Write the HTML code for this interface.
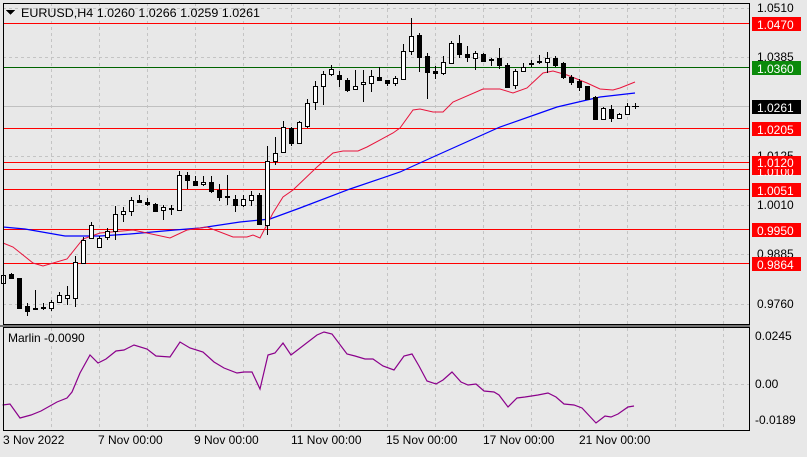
<!DOCTYPE html><html><head><meta charset="utf-8"><style>
body{margin:0;background:#e8e8e8;width:807px;height:452px;overflow:hidden;font-family:"Liberation Sans",sans-serif}
svg text{font-family:"Liberation Sans",sans-serif;font-size:12px}
</style></head><body>
<svg width="807" height="452" viewBox="0 0 807 452" xmlns="http://www.w3.org/2000/svg" shape-rendering="crispEdges">
<rect width="807" height="452" fill="#e8e8e8"/>
<g stroke="#c4c4c4" stroke-dasharray="3,3">
<line x1="3" y1="57.5" x2="750" y2="57.5"/><line x1="3" y1="156.5" x2="750" y2="156.5"/><line x1="3" y1="205.5" x2="750" y2="205.5"/><line x1="3" y1="254.5" x2="750" y2="254.5"/><line x1="3" y1="304.5" x2="750" y2="304.5"/><line x1="3" y1="8.5" x2="750" y2="8.5"/>
<line x1="3" y1="384.5" x2="750" y2="384.5"/>
<path d="M51.5 3V325M99.5 3V325M147.5 3V325M195.5 3V325M243.5 3V325M291.5 3V325M339.5 3V325M387.5 3V325M435.5 3V325M483.5 3V325M531.5 3V325M579.5 3V325M627.5 3V325M675.5 3V325M723.5 3V325"/>
<path d="M51.5 328V430M99.5 328V430M147.5 328V430M195.5 328V430M243.5 328V430M291.5 328V430M339.5 328V430M387.5 328V430M435.5 328V430M483.5 328V430M531.5 328V430M579.5 328V430M627.5 328V430M675.5 328V430M723.5 328V430"/>
</g>
<line x1="3" y1="106.5" x2="750" y2="106.5" stroke="#c0c0c0"/>
<g stroke="#ff0000">
<line x1="3" y1="23.5" x2="750" y2="23.5"/><line x1="3" y1="128.5" x2="750" y2="128.5"/><line x1="3" y1="162.5" x2="750" y2="162.5"/><line x1="3" y1="169.5" x2="750" y2="169.5"/><line x1="3" y1="189.5" x2="750" y2="189.5"/><line x1="3" y1="229.5" x2="750" y2="229.5"/><line x1="3" y1="263.5" x2="750" y2="263.5"/>
</g>
<line x1="3" y1="67.5" x2="750" y2="67.5" stroke="#006400"/>
<g shape-rendering="auto" fill="none">
<polyline stroke="#0000ff" stroke-width="1.2" points="3,227 25,229 65,236 100,236 130,234 175,230 200,228 240,222 270,219 300,208 350,189 400,172 433,157 500,127 540,113 557,107 587,100 600,97 635,93"/>
<polyline stroke="#e8143c" stroke-width="1" points="3,243 13,247 33,263 43,266 67,259 83,239 100,233 133,230 170,238 187,230 207,227 233,237 247,237 253,235 260,238 273,213 283,197 293,190 317,167 333,153 343,151 358,151 367,147 393,133 400,128 413,110 420,109 433,112 443,112 453,102 483,89 500,89 513,93 527,88 543,73 553,71 567,75 587,83 600,89 613,90 620,88 635,82"/>
</g>
<g stroke="#000" fill="#fff">
<path d="M3.5 272V286M11.5 273V279M19.5 278V309M27.5 303V316M35.5 290V310M43.5 303V310M51.5 300V311M59.5 292V303M67.5 286V305M75.5 256V307M83.5 237V264M91.5 222V239M99.5 236V247M107.5 228V240M115.5 206V240M123.5 207V222M131.5 197V216M139.5 195V202M147.5 198V206M155.5 203V212M163.5 205V220M171.5 205V215M179.5 171V211M187.5 172V189M195.5 176V186M203.5 176V186M211.5 176V193M219.5 184V201M227.5 175V205M235.5 195V212M243.5 195V207M251.5 191V206M259.5 193V225M267.5 146V235M275.5 137V165M283.5 121V152M291.5 127V146M299.5 121V143M307.5 99V128M315.5 81V110M323.5 71V105M331.5 65V76M339.5 71V87M347.5 78V92M355.5 70V90M363.5 70V102M371.5 70V92M379.5 67V81M387.5 80V86M395.5 76V86M403.5 44V79M411.5 18V55M419.5 33V72M427.5 53V99M435.5 66V79M443.5 56V75M451.5 41V64M459.5 35V58M467.5 46V62M475.5 51V70M483.5 53V62M491.5 58V66M499.5 48V69M507.5 63V87M515.5 69V89M523.5 63V72M531.5 60V67M539.5 55V64M547.5 52V73M555.5 56V67M563.5 62V79M571.5 75V85M579.5 79V91M587.5 86V100M595.5 96V120M603.5 107V120M611.5 105V122M619.5 113V118M627.5 103V115M635.5 103V109M632 106.5H639"/>
<rect x="1.5" y="275.5" width="4" height="8"/><rect x="57.5" y="295.5" width="4" height="7"/><rect x="49.5" y="302.5" width="4" height="6"/><rect x="65.5" y="295.5" width="4" height="3"/><rect x="73.5" y="262.5" width="4" height="36"/><rect x="81.5" y="240.5" width="4" height="23"/><rect x="89.5" y="225.5" width="4" height="13"/><rect x="97.5" y="238.5" width="4" height="9"/><rect x="105.5" y="231.5" width="4" height="6"/><rect x="113.5" y="214.5" width="4" height="17"/><rect x="121.5" y="211.5" width="4" height="3"/><rect x="129.5" y="200.5" width="4" height="11"/><rect x="161.5" y="207.5" width="4" height="3"/><rect x="177.5" y="175.5" width="4" height="35"/><rect x="201.5" y="182.5" width="4" height="2"/><rect x="241.5" y="199.5" width="4" height="6"/><rect x="249.5" y="195.5" width="4" height="5"/><rect x="265.5" y="161.5" width="4" height="64"/><rect x="273.5" y="153.5" width="4" height="8"/><rect x="281.5" y="127.5" width="4" height="25"/><rect x="297.5" y="122.5" width="4" height="21"/><rect x="305.5" y="103.5" width="4" height="23"/><rect x="313.5" y="86.5" width="4" height="16"/><rect x="321.5" y="74.5" width="4" height="12"/><rect x="329.5" y="69.5" width="4" height="5"/><rect x="353.5" y="86.5" width="4" height="3"/><rect x="361.5" y="82.5" width="4" height="2"/><rect x="369.5" y="76.5" width="4" height="7"/><rect x="393.5" y="78.5" width="4" height="5"/><rect x="401.5" y="51.5" width="4" height="28"/><rect x="409.5" y="36.5" width="4" height="15"/><rect x="441.5" y="62.5" width="4" height="11"/><rect x="449.5" y="43.5" width="4" height="20"/><rect x="473.5" y="53.5" width="4" height="5"/><rect x="513.5" y="71.5" width="4" height="14"/><rect x="521.5" y="67.5" width="4" height="4"/><rect x="545.5" y="58.5" width="4" height="4"/><rect x="601.5" y="108.5" width="4" height="11"/><rect x="617.5" y="114.5" width="4" height="4"/><rect x="625.5" y="106.5" width="4" height="8"/>
</g>
<g fill="#000">
<rect x="9" y="274" width="5" height="5"/><rect x="17" y="278" width="5" height="31"/><rect x="25" y="306" width="5" height="6"/><rect x="33" y="308" width="5" height="2"/><rect x="41" y="307" width="5" height="2"/><rect x="137" y="200" width="5" height="3"/><rect x="145" y="202" width="5" height="3"/><rect x="153" y="204" width="5" height="8"/><rect x="169" y="208" width="5" height="2"/><rect x="185" y="175" width="5" height="6"/><rect x="193" y="181" width="5" height="5"/><rect x="209" y="182" width="5" height="10"/><rect x="217" y="190" width="5" height="8"/><rect x="225" y="196" width="5" height="2"/><rect x="233" y="199" width="5" height="7"/><rect x="257" y="195" width="5" height="30"/><rect x="289" y="128" width="5" height="16"/><rect x="337" y="75" width="5" height="5"/><rect x="345" y="80" width="5" height="11"/><rect x="377" y="77" width="5" height="4"/><rect x="385" y="80" width="5" height="4"/><rect x="417" y="35" width="5" height="23"/><rect x="425" y="56" width="5" height="17"/><rect x="433" y="71" width="5" height="3"/><rect x="457" y="43" width="5" height="12"/><rect x="465" y="54" width="5" height="4"/><rect x="481" y="54" width="5" height="8"/><rect x="489" y="59" width="5" height="2"/><rect x="497" y="58" width="5" height="8"/><rect x="505" y="65" width="5" height="23"/><rect x="529" y="63" width="5" height="2"/><rect x="537" y="61" width="5" height="2"/><rect x="553" y="58" width="5" height="8"/><rect x="561" y="63" width="5" height="15"/><rect x="569" y="77" width="5" height="6"/><rect x="577" y="81" width="5" height="7"/><rect x="585" y="86" width="5" height="14"/><rect x="593" y="97" width="5" height="23"/><rect x="609" y="109" width="5" height="10"/>
</g>
<polyline shape-rendering="auto" fill="none" stroke="#8b008b" stroke-width="1.2" points="2.6,405 10,404 20,418 31,415 41,411 57,402 67,398 72,392 80,373 90,355 98,363 106,359 116,351 124,350 134,345 147,349 156,356 170,357 180,342 190,348 203,352 214,362 224,368 237,373 244,372 252,372 260,389 268,355 275,353 283,343 291,355 317,335 324,332 332,334 347,354 355,356 365,359 373,359 383,366 394,370 404,356 412,354 419,366 427,381 436,384 443,380 452,372 461,382 468,385 476,384 484,391 494,392 499,395 508,407 517,398 525,397 538,395 548,393 556,397 564,404 574,405 582,408 596,423 605,416 611,417 618,414 628,407 634,406"/>
<rect x="3.5" y="3.5" width="746" height="321" fill="none" stroke="#000"/>
<rect x="3.5" y="327.5" width="746" height="103" fill="none" stroke="#000"/>
<line x1="0" y1="326" x2="750" y2="326" stroke="#000"/>
<path d="M6 10H15L10.5 15Z" fill="#000"/>
<text x="21" y="17" fill="#000" font-size="12.5" textLength="239" lengthAdjust="spacingAndGlyphs">EURUSD,H4  1.0260 1.0266 1.0259 1.0261</text>
<text x="8" y="342" fill="#000">Marlin -0.0090</text>
<g fill="#000">
<text x="757" y="12">1.0510</text><text x="757" y="61">1.0385</text><text x="757" y="160">1.0125</text><text x="757" y="209">1.0010</text><text x="757" y="258">0.9885</text><text x="757" y="308">0.9760</text>
<text x="755" y="340">0.0245</text><text x="755" y="388">0.00</text><text x="755" y="424">-0.0189</text>
<text x="3" y="444">3 Nov 2022</text><text x="98" y="444">7 Nov 00:00</text><text x="194" y="444">9 Nov 00:00</text><text x="291" y="444">11 Nov 00:00</text><text x="386" y="444">15 Nov 00:00</text><text x="483" y="444">17 Nov 00:00</text><text x="579" y="444">21 Nov 00:00</text>
</g>
<g fill="#ff0000"><rect x="752" y="17" width="49" height="14"/><rect x="752" y="122" width="49" height="14"/><rect x="752" y="156" width="49" height="14"/><rect x="752" y="165" width="49" height="10"/><rect x="752" y="183" width="49" height="14"/><rect x="752" y="223" width="49" height="14"/><rect x="752" y="257" width="49" height="14"/></g>
<rect x="752" y="61" width="49" height="14" fill="#0b8a0b"/><rect x="752" y="100" width="49" height="14" fill="#000"/>
<g fill="#fff"><text x="757" y="176">1.0100</text><text x="757" y="29">1.0470</text><text x="757" y="73">1.0360</text><text x="757" y="112">1.0261</text><text x="757" y="134">1.0205</text><text x="757" y="195">1.0051</text><text x="757" y="235">0.9950</text><text x="757" y="269">0.9864</text></g>
<rect x="752" y="156" width="49" height="13" fill="#ff0000"/><text x="757" y="167" fill="#fff">1.0120</text>
</svg>
</body></html>
